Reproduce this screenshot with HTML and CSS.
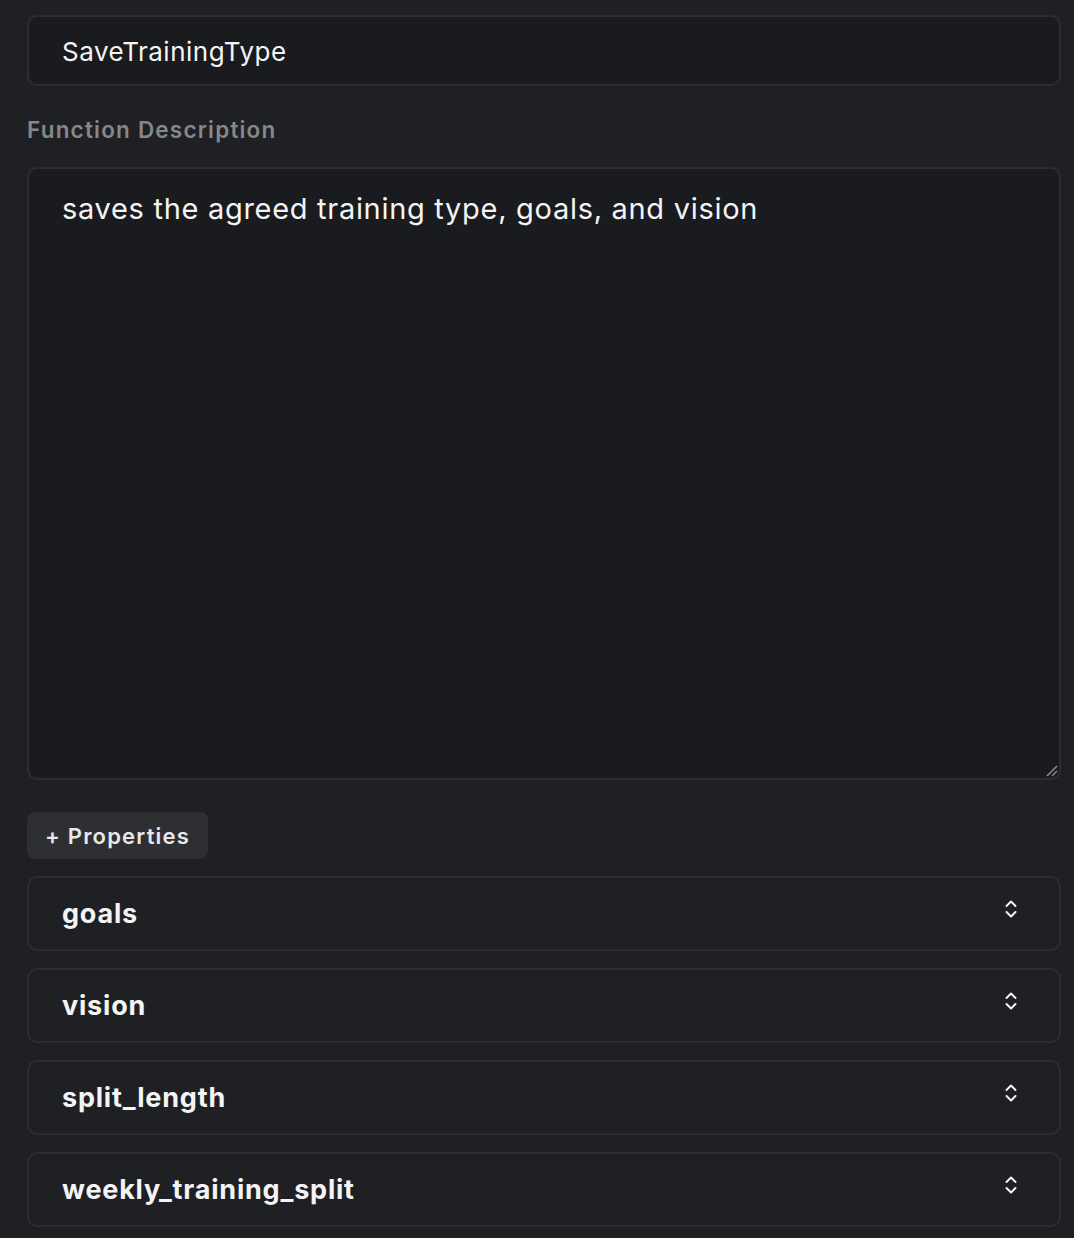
FILE: index.html
```html
<!DOCTYPE html>
<html>
<head>
<meta charset="utf-8">
<link rel="stylesheet" href="styles.css">
</head>
<body>
<div class="panel">
  <div class="input">SaveTrainingType</div>
  <div class="label">Function Description</div>
  <div class="textarea">saves the agreed training type, goals, and vision
    <svg class="grip" width="14" height="14" viewBox="0 0 14 14"><path d="M13 3 L3 13 M13 8 L8 13" stroke="#8a8b8f" stroke-width="1.5" fill="none"/></svg>
  </div>
  <button class="add">+ Properties</button>
  <div class="props">
    <div class="prop"><span>goals</span><svg class="chev" width="12" height="18" viewBox="0 0 12 18"><path d="M1.5 6 L6 1.5 L10.5 6 M1.5 12 L6 16.5 L10.5 12" stroke="#f2f2f2" stroke-width="2" fill="none" stroke-linecap="round" stroke-linejoin="round"/></svg></div>
    <div class="prop"><span>vision</span><svg class="chev" width="12" height="18" viewBox="0 0 12 18"><path d="M1.5 6 L6 1.5 L10.5 6 M1.5 12 L6 16.5 L10.5 12" stroke="#f2f2f2" stroke-width="2" fill="none" stroke-linecap="round" stroke-linejoin="round"/></svg></div>
    <div class="prop"><span>split_length</span><svg class="chev" width="12" height="18" viewBox="0 0 12 18"><path d="M1.5 6 L6 1.5 L10.5 6 M1.5 12 L6 16.5 L10.5 12" stroke="#f2f2f2" stroke-width="2" fill="none" stroke-linecap="round" stroke-linejoin="round"/></svg></div>
    <div class="prop"><span>weekly_training_split</span><svg class="chev" width="12" height="18" viewBox="0 0 12 18"><path d="M1.5 6 L6 1.5 L10.5 6 M1.5 12 L6 16.5 L10.5 12" stroke="#f2f2f2" stroke-width="2" fill="none" stroke-linecap="round" stroke-linejoin="round"/></svg></div>
  </div>
</div>
</body>
</html>
```

FILE: styles.css
```css
html, body {
  margin: 0;
  padding: 0;
  background: #1f2023;
  font-family: Inter, "Noto Sans", sans-serif;
  color: #f4f4f5;
}
.panel {
  padding: 15px 13px 0 27px;
  display: flex;
  flex-direction: column;
}
.input {
  height: 71px;
  box-sizing: border-box;
  border: 2px solid #2c2d31;
  border-radius: 10px;
  background: #1a1b1e;
  padding: 2px 33px 0;
  display: flex;
  align-items: center;
  font-size: 26px;
  letter-spacing: 0.5px;
}
.label {
  margin-top: 29px;
  height: 30px;
  line-height: 30px;
  font-size: 22.5px;
  font-weight: 600;
  color: #86878a;
  letter-spacing: 1.2px;
}
.textarea {
  margin-top: 22px;
  height: 613px;
  box-sizing: border-box;
  border: 2px solid #2c2d31;
  border-radius: 10px;
  background: #1a1b1e;
  padding: 22px 33px;
  font-size: 29px;
  line-height: 36px;
  letter-spacing: 0.7px;
  position: relative;
}
.grip {
  position: absolute;
  right: 1px;
  bottom: 1px;
}
.add {
  margin-top: 32px;
  align-self: flex-start;
  height: 47px;
  padding: 0 18px;
  border: none;
  border-radius: 8px;
  background: #2e2f32;
  color: #e8e8ea;
  font-family: Inter, "Noto Sans", sans-serif;
  font-size: 22px;
  font-weight: 600;
  letter-spacing: 1.2px;
}
.props {
  margin-top: 17px;
  display: flex;
  flex-direction: column;
  gap: 17px;
}
.prop {
  height: 75px;
  box-sizing: border-box;
  border: 2px solid #2c2d31;
  border-radius: 10px;
  padding: 0 42px 0 33px;
  display: flex;
  align-items: center;
  justify-content: space-between;
  font-size: 27px;
  font-weight: 700;
  letter-spacing: 0.8px;
}
.chev {
  margin-top: -10px;
}
```
